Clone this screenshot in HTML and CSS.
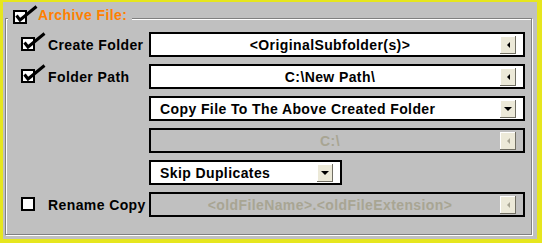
FILE: index.html
```html
<!DOCTYPE html>
<html lang="en">
<head>
  <meta charset="UTF-8">
  <title>Archive File</title>
  <link rel="stylesheet" href="styles.css">
</head>
<body>
<div class="screen">
  <div class="group">
    <div class="group-title">
      <svg class="check" width="25" height="20" viewBox="0 0 25 20">
        <rect x="1" y="6" width="12" height="12" fill="#fff" stroke="#000" stroke-width="2"/>
        <polyline points="3.5,10.5 7,15 23.5,1.5" fill="none" stroke="#000" stroke-width="3"/>
      </svg>
      <span>Archive File:</span>
    </div>
    <div class="rows">
      <div class="opt">
        <svg class="check" width="25" height="20" viewBox="0 0 25 20">
          <rect x="1" y="6" width="12" height="12" fill="#fff" stroke="#000" stroke-width="2"/>
          <polyline points="3.5,10.5 7,15 23.5,1.5" fill="none" stroke="#000" stroke-width="3"/>
        </svg>
        <span>Create Folder</span>
      </div>
      <div class="field center">
        <span class="value">&lt;OriginalSubfolder(s)&gt;</span>
        <span class="btn"><i class="arrow-left"></i></span>
      </div>

      <div class="opt">
        <svg class="check" width="25" height="20" viewBox="0 0 25 20">
          <rect x="1" y="6" width="12" height="12" fill="#fff" stroke="#000" stroke-width="2"/>
          <polyline points="3.5,10.5 7,15 23.5,1.5" fill="none" stroke="#000" stroke-width="3"/>
        </svg>
        <span>Folder Path</span>
      </div>
      <div class="field center">
        <span class="value">C:\New Path\</span>
        <span class="btn"><i class="arrow-left"></i></span>
      </div>

      <div></div>
      <div class="field">
        <span class="value">Copy File To The Above Created Folder</span>
        <span class="btn"><i class="arrow-down"></i></span>
      </div>

      <div></div>
      <div class="field center disabled">
        <span class="value">C:\</span>
        <span class="btn"><i class="arrow-left"></i></span>
      </div>

      <div></div>
      <div class="field short">
        <span class="value">Skip Duplicates</span>
        <span class="btn"><i class="arrow-down"></i></span>
      </div>

      <div class="opt">
        <svg class="check" width="25" height="20" viewBox="0 0 25 20">
          <rect x="1" y="6" width="12" height="12" fill="#fff" stroke="#000" stroke-width="2"/>
        </svg>
        <span>Rename Copy</span>
      </div>
      <div class="field center disabled">
        <span class="value">&lt;oldFileName&gt;.&lt;oldFileExtension&gt;</span>
        <span class="btn"><i class="arrow-left"></i></span>
      </div>
    </div>
  </div>
</div>
</body>
</html>
```

FILE: styles.css
```css
html, body {
  margin: 0;
  padding: 0;
}

body {
  width: 542px;
  height: 243px;
  background: #e6e61e;
  font-family: "Liberation Sans", Arial, sans-serif;
  font-size: 14px;
  font-weight: bold;
  letter-spacing: 0.4px;
  color: #000;
  overflow: hidden;
}

.screen {
  margin: 2px 5px 0 3px;
  width: 534px;
  height: 237px;
  background: #c0c0c0;
  display: flex;
  flex-direction: column;
}

.group {
  margin: 16px 5px 4px 2px;
  flex: 1;
  border: 1px solid #808080;
  box-shadow: 1px 1px 0 #fff, inset 1px 1px 0 #fff;
}

.group-title {
  display: flex;
  align-items: center;
  width: max-content;
  height: 22px;
  margin: -15px 0 0 2px;
  padding: 0 5px 0 5px;
  background: #c0c0c0;
  color: #ff7f00;
}

.group-title .check {
  margin-top: -1px;
}

.check {
  display: block;
  flex: none;
}

.rows {
  display: grid;
  grid-template-columns: 128px 376px;
  grid-auto-rows: 25px;
  row-gap: 7px;
  margin: 6px 0 0 15px;
}

.opt {
  display: flex;
  align-items: center;
  gap: 2px;
}

.opt .check {
  margin-top: -5px;
}

.field {
  display: flex;
  align-items: center;
  box-sizing: border-box;
  border: 2px solid #000;
  background: #fff;
  padding: 0 7px 0 9px;
}

.field.short {
  width: 193px;
}

.field .value {
  flex: 1;
  white-space: nowrap;
}

.field.center .value {
  text-align: center;
}

.field.disabled {
  background: #c0c0c0;
  color: #a8a593;
}

.btn {
  flex: none;
  width: 16px;
  height: 18px;
  background: #ece9d8;
  box-shadow: inset -1px -1px 0 #716f64, inset 1px 1px 0 #fff;
  display: flex;
  align-items: center;
  justify-content: center;
}

.arrow-left {
  width: 0;
  height: 0;
  border-top: 3px solid transparent;
  border-bottom: 3px solid transparent;
  border-right: 3px solid #000;
}

.arrow-down {
  width: 0;
  height: 0;
  border-left: 4px solid transparent;
  border-right: 4px solid transparent;
  border-top: 4px solid #000;
}

.disabled .arrow-left {
  border-right-color: #a8a593;
}
```
